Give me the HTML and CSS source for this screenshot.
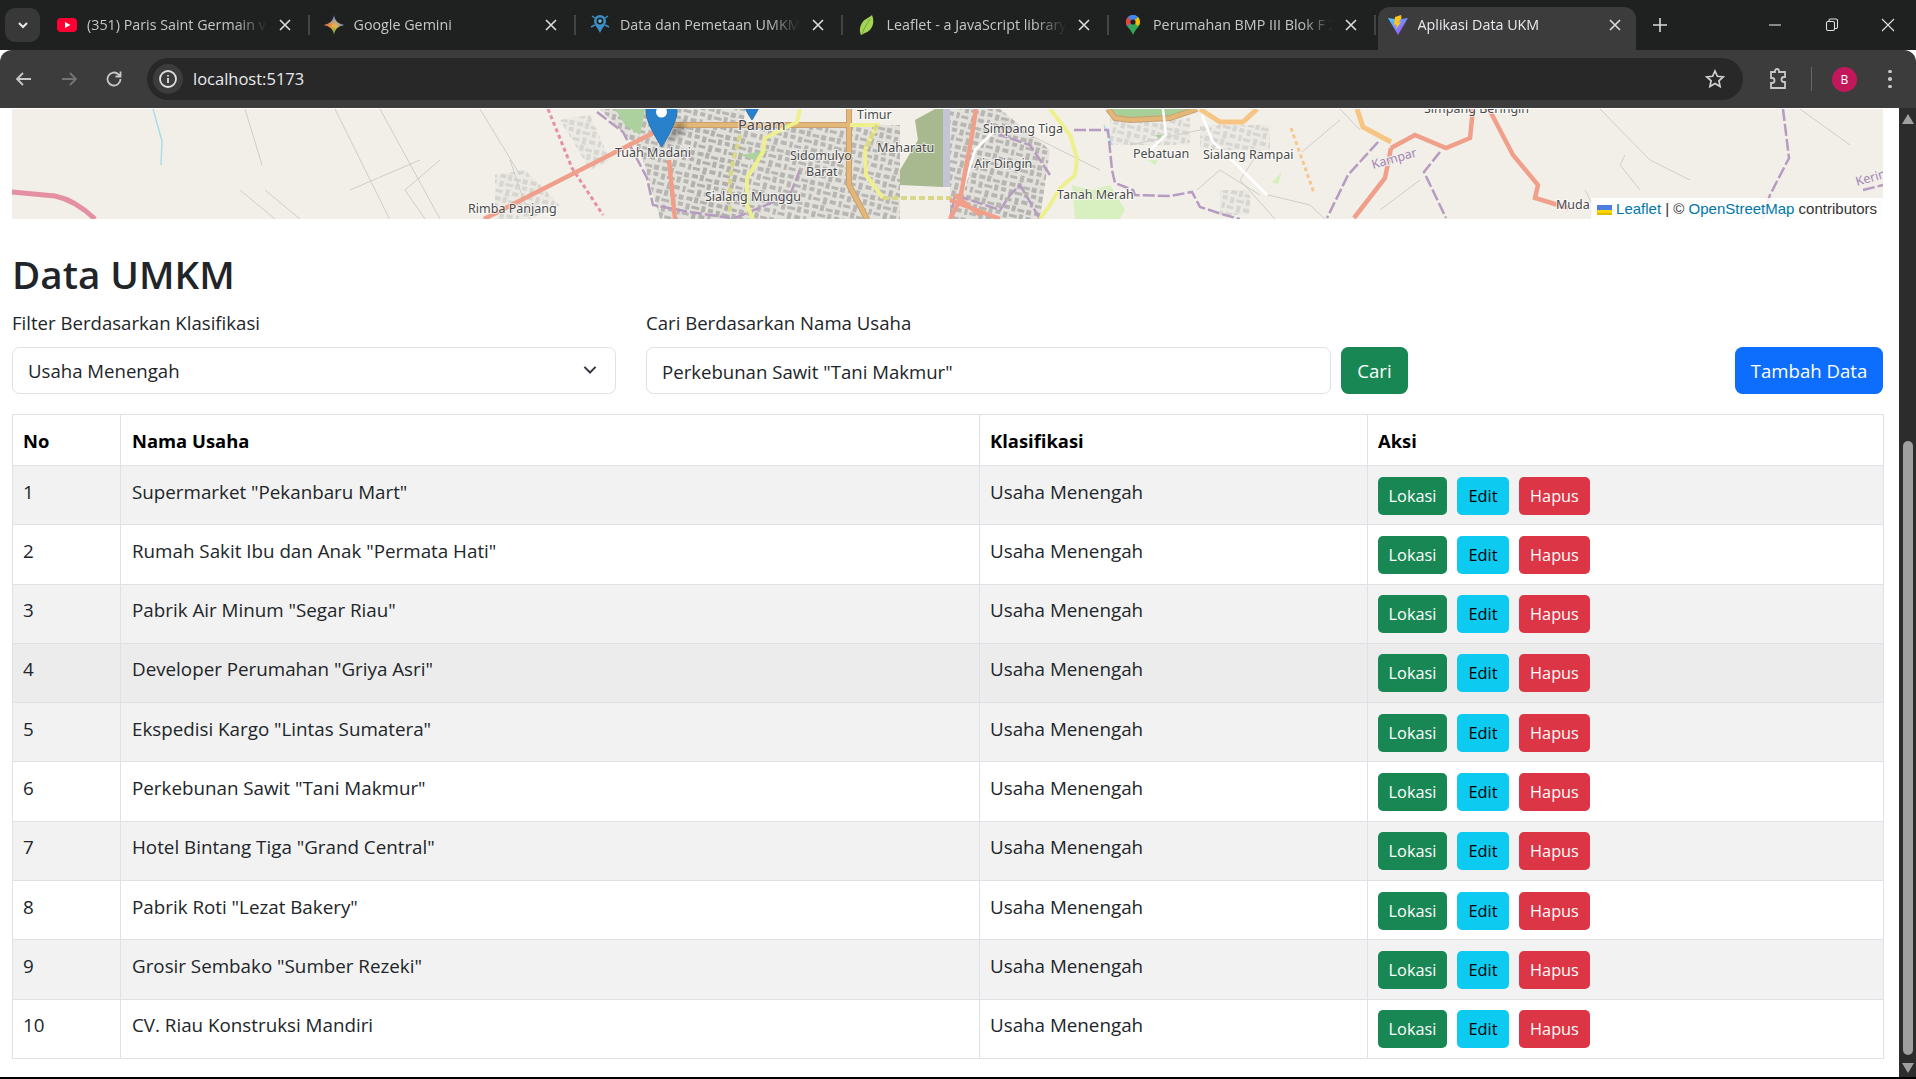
FILE: index.html
```html
<!DOCTYPE html>
<html lang="id">
<head>
<meta charset="utf-8">
<title>Aplikasi Data UKM</title>
<link rel="stylesheet" href="styles.css">
</head>
<body>
<div class="browser">
  <header class="tabstrip">
    <button class="tab-search" aria-label="Cari tab"><svg width="14" height="14" viewBox="0 0 14 14"><path class="ic-bold" d="M3 5l4 4 4-4"/></svg></button>
    <div class="tab">
      <svg class="fav" width="20" height="20" viewBox="0 0 20 20"><rect x="0" y="3" width="20" height="14" rx="4" fill="#ff0033"/><path d="M8 7l5.500 3L8 13z" fill="#fff"/></svg>
      <span class="tab-title">(351) Paris Saint Germain vs Arsenal</span>
      <svg class="tab-close" width="12" height="12" viewBox="0 0 12 12"><path d="M1 1l10 10M11 1L1 11"/></svg>
    </div>
    <div class="tab">
      <svg class="fav" width="20" height="20" viewBox="0 0 20 20"><defs><linearGradient id="gem" x1="0" y1="0" x2="0" y2="1"><stop offset="0" stop-color="#4c8df6"/><stop offset=".55" stop-color="#f3b33d"/><stop offset="1" stop-color="#34a853"/></linearGradient><linearGradient id="gem2" x1="0" y1="0" x2="1" y2="0"><stop offset="0" stop-color="#e8574b"/><stop offset=".5" stop-color="#e8574b" stop-opacity="0"/><stop offset=".6" stop-color="#4c8df6" stop-opacity="0"/><stop offset="1" stop-color="#4c8df6"/></linearGradient></defs><path d="M10 0c.8 5.500 4 9 10 10-6 1-9.200 4.500-10 10-.8-5.500-4-9-10-10C6 9 9.200 5.500 10 0z" fill="url(#gem)"/><path d="M10 0c.8 5.500 4 9 10 10-6 1-9.200 4.500-10 10-.8-5.500-4-9-10-10C6 9 9.200 5.500 10 0z" fill="url(#gem2)"/></svg>
      <span class="tab-title">Google Gemini</span>
      <svg class="tab-close" width="12" height="12" viewBox="0 0 12 12"><path d="M1 1l10 10M11 1L1 11"/></svg>
    </div>
    <div class="tab">
      <svg class="fav" width="20" height="20" viewBox="0 0 20 20"><path d="M4 6a6 6 0 0 1 12 0c0 4-4 7-6 12C8 13 4 10 4 6z" fill="#3b8fc4"/><circle cx="10" cy="6" r="3.500" fill="#1f2222"/><circle cx="10" cy="6" r="1.800" fill="#6db7e3"/><path d="M1 12l4-2M19 12l-4-2M2 1l3 2M18 1l-3 2" stroke="#3b8fc4" stroke-width="1.400"/></svg>
      <span class="tab-title">Data dan Pemetaan UMKM Pekanbaru</span>
      <svg class="tab-close" width="12" height="12" viewBox="0 0 12 12"><path d="M1 1l10 10M11 1L1 11"/></svg>
    </div>
    <div class="tab">
      <svg class="fav" width="20" height="20" viewBox="0 0 20 20"><path d="M15 0c3 7 1 15-7 18-2 1-4 2-4 2s-3-6 1-12C7 4 12 3 15 0z" fill="#a4d454"/><path d="M13 4C10 9 7 13 5 19" stroke="#6c9a2c" stroke-width=".8" fill="none"/></svg>
      <span class="tab-title">Leaflet - a JavaScript library for</span>
      <svg class="tab-close" width="12" height="12" viewBox="0 0 12 12"><path d="M1 1l10 10M11 1L1 11"/></svg>
    </div>
    <div class="tab">
      <svg class="fav" width="20" height="20" viewBox="0 0 20 20"><path d="M10 0a7 7 0 0 1 7 7c0 5-5 7-7 13-2-6-7-8-7-13a7 7 0 0 1 7-7z" fill="#34a853"/><path d="M5 2a7 7 0 0 1 10 0L5 12a7 7 0 0 1-2-5 7 7 0 0 1 2-5z" fill="#4285f4"/><path d="M5 2l5 5-6 4c-1-1-1-3-1-4a7 7 0 0 1 2-5z" fill="#ea4335"/><path d="M15 2a7 7 0 0 1 2 5c0 2-1 3-2 4L10 7z" fill="#fbbc04"/><circle cx="10" cy="7" r="2.600" fill="#1f2222"/></svg>
      <span class="tab-title">Perumahan BMP III Blok F 2 No 12</span>
      <svg class="tab-close" width="12" height="12" viewBox="0 0 12 12"><path d="M1 1l10 10M11 1L1 11"/></svg>
    </div>
    <div class="tab tab-active">
      <svg class="fav" width="20" height="20" viewBox="0 0 20 20"><defs><linearGradient id="vite" x1="0" y1="0" x2="1" y2="1"><stop offset="0" stop-color="#41d1ff"/><stop offset="1" stop-color="#bd34fe"/></linearGradient></defs><path d="M0 3l10 1.500L20 3 10 20z" fill="url(#vite)"/><path d="M13 0L7 2 6 10l2.500-.5L8 14l5-7-2.500.5L13.500 3z" fill="#ffc517"/></svg>
      <span class="tab-title">Aplikasi Data UKM</span>
      <svg class="tab-close" width="12" height="12" viewBox="0 0 12 12"><path d="M1 1l10 10M11 1L1 11"/></svg>
    </div>
    <svg class="new-tab" width="16" height="16" viewBox="0 0 16 16"><path d="M8 1v14M1 8h14"/></svg>
    <div class="window-controls">
      <svg width="14" height="14" viewBox="0 0 14 14"><path d="M1 7h12"/></svg>
      <svg width="14" height="14" viewBox="0 0 14 14"><rect x="1.500" y="3.500" width="8" height="9" rx="1.500"/><path d="M4 3V2.500A1.500 1.500 0 0 1 5.500 1H11a1.500 1.500 0 0 1 1.500 1.500V9a1.500 1.500 0 0 1-1.500 1.500h-1"/></svg>
      <svg width="14" height="14" viewBox="0 0 14 14"><path d="M1 1l12 12M13 1L1 13"/></svg>
    </div>
  </header>

  <nav class="toolbar">
    <svg class="nav-ic" width="20" height="20" viewBox="0 0 20 20"><path d="M17 10H3M9 4l-6 6 6 6"/></svg>
    <svg class="nav-ic nav-off" width="20" height="20" viewBox="0 0 20 20"><path d="M3 10h14M11 4l6 6-6 6"/></svg>
    <svg class="nav-ic" width="20" height="20" viewBox="0 0 20 20"><path d="M16.500 10a6.500 6.500 0 1 1-2-4.700L16.500 7.500M16.500 2.500v5h-5"/></svg>
    <div class="omnibox">
      <span class="site-info"><svg width="20" height="20" viewBox="0 0 20 20"><circle cx="10" cy="10" r="8"/><path d="M10 9v5M10 6v1.500"/></svg></span>
      <span class="url">localhost:5173</span>
      <svg class="star" width="20" height="20" viewBox="0 0 20 20"><path d="M10 2l2.400 5.300 5.800.6-4.300 3.900 1.200 5.700L10 14.600l-5.100 2.900 1.200-5.700L1.800 7.900l5.800-.6z"/></svg>
    </div>
    <svg class="ext" width="20" height="22" viewBox="0 0 20 22"><path d="M7 4V3a2 2 0 0 1 4 0v1h6v5h-1a2 2 0 0 0 0 5h1v6H3v-5h1a2 2 0 0 0 0-5H3V4z"/></svg>
    <span class="tool-sep"></span>
    <span class="avatar">B</span>
    <span class="kebab"><i></i><i></i><i></i></span>
  </nav>

  <div class="viewport">
    <main class="page">
      <section class="map">
        <svg class="map-svg" viewBox="12 109 1871 110" preserveAspectRatio="none">
          <defs>
            <pattern id="blocks" width="31" height="23" patternUnits="userSpaceOnUse" patternTransform="rotate(14)">
              <rect width="31" height="23" class="blk-bg"/>
              <rect x="1" y="1" width="6" height="4" class="blk"/><rect x="9" y="0" width="4" height="6" class="blk"/><rect x="15" y="2" width="7" height="3" class="blk"/><rect x="24" y="1" width="5" height="5" class="blk"/>
              <rect x="2" y="8" width="4" height="6" class="blk"/><rect x="8" y="9" width="8" height="3" class="blk"/><rect x="18" y="7" width="4" height="6" class="blk"/><rect x="25" y="8" width="5" height="4" class="blk"/>
              <rect x="0" y="17" width="7" height="3" class="blk"/><rect x="10" y="15" width="4" height="7" class="blk"/><rect x="17" y="16" width="6" height="4" class="blk"/><rect x="26" y="15" width="3" height="6" class="blk"/>
            </pattern>
            <filter id="soft"><feGaussianBlur stdDeviation=".7"/></filter>
            <filter id="shadow"><feGaussianBlur stdDeviation="3"/></filter>
          </defs>
          <g filter="url(#soft)">
            <path class="city" d="M600 109L640 150L660 219H735L745 109z"/>
            <path class="city" d="M690 125H850V219H690z"/>
            <path class="city" d="M850 125H900V219H850z"/>
            <path class="city" d="M950 109H1000L1050 150L1040 219H950z"/>
            <path class="city-thin" d="M1110 118H1190V145H1110zM1200 125H1270V150H1200zM1220 190H1250V215H1220zM1000 190H1040V219H1000z"/>
            <path class="city-thin" d="M495 175L525 170L560 205L530 219H495zM560 120L590 115L610 160L590 170z"/>
            <path class="green" d="M615 109H645L640 135L625 125z"/>
            <path class="forest" d="M935 109H943V187L900 185L900 170L918 140L915 120z"/>
            <path class="airport" d="M943 109H950V187H943z"/>
            <path class="green-l" d="M1072 185L1092 190L1110 185L1125 210L1120 219H1075z"/>
            <path class="green-l" d="M1272 182L1282 172L1278 185zM1147 160H1158L1155 165z"/>
            <path class="green-band" d="M1108 109H1197L1170 117L1130 120L1108 112z"/>
            <path class="green" d="M740 155L770 150L755 160zM1155 135L1162 135L1160 140z"/>
            <path class="thin" d="M245 109L262 165M380 109L440 219M335 109L395 230M240 190L275 219M265 190L300 219M425 219L405 190L440 160M350 190L420 160M480 109L520 175M510 160L530 219M1000 120L1100 170M1200 130L1130 145M1302 152L1340 120M1275 219L1240 180L1260 150M1268 195L1310 205L1325 219M1197 190L1220 170L1260 195M1340 109L1360 130M1600 109L1650 160L1690 180M1640 190L1620 165L1625 155M1800 109L1850 145M1420 180L1380 210M1585 190L1600 219"/>
            <path class="river" d="M153 109L162 141L161 165M1104 125L1112 145"/>
            <path class="motorway" d="M12 192L55 196Q75 200 95 219"/>
            <path class="rail-pink" d="M548 109L572 168L603 215"/>
            <path class="rail-orange" d="M1291 128L1314 193"/>
            <path class="boundary" d="M597 112L623 132L647 178L653 205L690 212L730 218M735 218L790 195L800 170M1074 130L1108 130L1112 170L1115 183L1133 190L1135 195L1170 196L1192 192L1200 207L1225 215L1240 219M1378 142L1348 175L1327 218M1440 152L1424 172L1446 218M1783 109L1789 158L1770 195L1762 219M1050 175L1030 145L1000 135M1040 219L1020 185L1010 195L1000 210L955 195L950 219M1863 190L1883 185"/>
            <path class="road-tan-c" d="M672 125H850M849 109V185L867 219"/>
            <path class="road-tan" d="M672 125H850M849 109V185L867 219"/>
            <path class="road-tan-c" d="M1108 109L1115 118L1130 120L1170 118L1197 109"/>
            <path class="road-tan" d="M1108 109L1115 118L1130 120L1170 118L1197 109"/>
            <path class="road-orange" d="M1200 109L1220 122L1243 122L1257 109M1357 109L1363 127L1391 142"/>
            <path class="road-yellow" d="M800 109L797 122L765 138L763 152L747 178L747 205L753 219M850 125H877L865 150L866 175L883 198M1050 109L1070 135L1077 158L1075 175L1060 188L1050 205L1040 219"/>
            <path class="road-yellow-d" d="M883 198H960M740 135L733 162L730 178L730 212M877 125L865 150"/>
            <path class="road-white" d="M1202 115L1213 142L1237 165L1267 195M1163 109L1166 135L1150 150M960 200L975 150L995 130"/>
            <path class="road-pink" d="M484 219L655 132M669 160L675 219M1391 148L1415 135L1446 148L1470 138L1473 109M1391 148L1385 178L1354 218M1489 109L1513 155L1538 185L1535 198L1568 208M976 109L972 135L960 200L950 219M950 200L1000 219M955 195L980 215"/>
          </g>
          <text class="lbl" x="615" y="157">Tuah Madani</text>
          <text class="lbl lbl-big" x="738" y="130">Panam</text>
          <text class="lbl" x="857" y="119">Timur</text>
          <text class="lbl" x="877" y="152">Maharatu</text>
          <text class="lbl" x="790" y="160">Sidomulyo</text>
          <text class="lbl" x="806" y="176">Barat</text>
          <text class="lbl" x="705" y="201">Sialang Munggu</text>
          <text class="lbl" x="468" y="213">Rimba Panjang</text>
          <text class="lbl" x="983" y="133">Simpang Tiga</text>
          <text class="lbl" x="974" y="168">Air Dingin</text>
          <text class="lbl" x="1133" y="158">Pebatuan</text>
          <text class="lbl" x="1203" y="159">Sialang Rampai</text>
          <text class="lbl" x="1057" y="199">Tanah Merah</text>
          <text class="lbl" x="1424" y="113">Simpang Beringin</text>
          <text class="lbl" x="1556" y="209">Muda</text>
          <text class="lbl-purple" transform="translate(1373 169) rotate(-16)">Kampar</text>
          <text class="lbl-purple" transform="translate(1857 186) rotate(-16)">Kerinci</text>
          <path class="pin-shadow" filter="url(#shadow)" d="M661 147L680 120L686 130z"/>
          <path class="pin" d="M661.600 96C652 96 646 103 646 112C646 123 661.600 147 661.600 147C661.600 147 677 123 677 112C677 103 671 96 661.600 96z"/>
          <circle class="pin-dot" cx="661.500" cy="112" r="5.500"/>
          <path class="pin" d="M752 69C742 69 736 76 736 85C736 96 752 120 752 120C752 120 767 96 767 85C767 76 762 69 752 69z"/>
        </svg>
        <div class="attribution"><svg class="flag" width="15" height="10" viewBox="0 0 15 10"><rect width="15" height="5" fill="#4C7BE1"/><rect y="5" width="15" height="3" fill="#FFD500"/><rect y="8" width="15" height="2" fill="#E0BC00"/></svg><a href="#">Leaflet</a> | © <a href="#">OpenStreetMap</a> contributors</div>
      </section>

      <h2 class="title">Data UMKM</h2>

      <form class="filters">
        <div class="field field-select">
          <label for="klas">Filter Berdasarkan Klasifikasi</label>
          <div class="select-wrap">
            <select id="klas" class="control"><option>Usaha Menengah</option></select>
            <svg class="chevron" width="20" height="20" viewBox="0 0 16 16"><path d="M3.500 5.500L8 10l4.500-4.500"/></svg>
          </div>
        </div>
        <div class="field field-search">
          <label for="cari">Cari Berdasarkan Nama Usaha</label>
          <div class="search-row">
            <input id="cari" class="control" type="text" value="Perkebunan Sawit &quot;Tani Makmur&quot;">
            <button type="button" class="btn btn-lg-green">Cari</button>
          </div>
        </div>
        <button type="button" class="btn btn-add">Tambah Data</button>
      </form>

      <table class="data">
        <colgroup><col class="c1"><col class="c2"><col class="c3"><col class="c4"></colgroup>
        <thead><tr><th>No</th><th>Nama Usaha</th><th>Klasifikasi</th><th>Aksi</th></tr></thead>
        <tbody>
          <tr><td>1</td><td>Supermarket "Pekanbaru Mart"</td><td>Usaha Menengah</td><td><div class="acts"><button class="btn sm lokasi">Lokasi</button><button class="btn sm edit">Edit</button><button class="btn sm hapus">Hapus</button></div></td></tr>
          <tr><td>2</td><td>Rumah Sakit Ibu dan Anak "Permata Hati"</td><td>Usaha Menengah</td><td><div class="acts"><button class="btn sm lokasi">Lokasi</button><button class="btn sm edit">Edit</button><button class="btn sm hapus">Hapus</button></div></td></tr>
          <tr><td>3</td><td>Pabrik Air Minum "Segar Riau"</td><td>Usaha Menengah</td><td><div class="acts"><button class="btn sm lokasi">Lokasi</button><button class="btn sm edit">Edit</button><button class="btn sm hapus">Hapus</button></div></td></tr>
          <tr class="hovered"><td>4</td><td>Developer Perumahan "Griya Asri"</td><td>Usaha Menengah</td><td><div class="acts"><button class="btn sm lokasi">Lokasi</button><button class="btn sm edit">Edit</button><button class="btn sm hapus">Hapus</button></div></td></tr>
          <tr><td>5</td><td>Ekspedisi Kargo "Lintas Sumatera"</td><td>Usaha Menengah</td><td><div class="acts"><button class="btn sm lokasi">Lokasi</button><button class="btn sm edit">Edit</button><button class="btn sm hapus">Hapus</button></div></td></tr>
          <tr><td>6</td><td>Perkebunan Sawit "Tani Makmur"</td><td>Usaha Menengah</td><td><div class="acts"><button class="btn sm lokasi">Lokasi</button><button class="btn sm edit">Edit</button><button class="btn sm hapus">Hapus</button></div></td></tr>
          <tr><td>7</td><td>Hotel Bintang Tiga "Grand Central"</td><td>Usaha Menengah</td><td><div class="acts"><button class="btn sm lokasi">Lokasi</button><button class="btn sm edit">Edit</button><button class="btn sm hapus">Hapus</button></div></td></tr>
          <tr><td>8</td><td>Pabrik Roti "Lezat Bakery"</td><td>Usaha Menengah</td><td><div class="acts"><button class="btn sm lokasi">Lokasi</button><button class="btn sm edit">Edit</button><button class="btn sm hapus">Hapus</button></div></td></tr>
          <tr><td>9</td><td>Grosir Sembako "Sumber Rezeki"</td><td>Usaha Menengah</td><td><div class="acts"><button class="btn sm lokasi">Lokasi</button><button class="btn sm edit">Edit</button><button class="btn sm hapus">Hapus</button></div></td></tr>
          <tr><td>10</td><td>CV. Riau Konstruksi Mandiri</td><td>Usaha Menengah</td><td><div class="acts"><button class="btn sm lokasi">Lokasi</button><button class="btn sm edit">Edit</button><button class="btn sm hapus">Hapus</button></div></td></tr>
        </tbody>
      </table>
    </main>
    <aside class="scrollbar">
      <svg width="12" height="10" viewBox="0 0 12 10"><path d="M6 0l6 10H0z"/></svg>
      <div class="thumb"></div>
      <svg width="12" height="10" viewBox="0 0 12 10"><path d="M0 0h12L6 10z"/></svg>
    </aside>
  </div>
  <div class="taskbar-edge"></div>
</div>
</body>
</html>
```
FILE: styles.css
```css
* { box-sizing: border-box; }
html, body { margin: 0; height: 100%; overflow: hidden; background: #fff; }
body { font-family: "Open Sans", "Noto Sans", sans-serif; font-size: 18.6px; line-height: 30px; color: #212529; }
.browser { width: 1916px; height: 1079px; display: flex; flex-direction: column; overflow: hidden; }

/* tab strip */
.tabstrip { height: 50px; background: #1f2121; display: flex; align-items: flex-start; padding: 7px 0 0 5px; flex: none; }
.tab-search { width: 35px; height: 34px; margin: 1px 4px 0 0; border: 0; border-radius: 10px; background: #383838; display: flex; align-items: center; justify-content: center; padding: 0; }
.ic-bold { fill: none; stroke: #e8e8e8; stroke-width: 2; }
.tab { width: 266.5px; height: 43px; flex: none; display: flex; align-items: center; padding: 0 20px 7px 13px; position: relative; color: #c4c7c5; font-size: 14.300px; line-height: 20px; }
.tab::after { content: ""; position: absolute; right: 1px; top: 8px; width: 2px; height: 20px; background: #444; }
.tab:nth-last-of-type(2)::after, .tab-active::after { display: none; }
.fav { flex: none; margin-right: 10px; }
.tab-title { flex: 1; min-width: 0; white-space: nowrap; overflow: hidden; -webkit-mask-image: linear-gradient(90deg, #000 82%, transparent 100%); mask-image: linear-gradient(90deg, #000 82%, transparent 100%); }
.tab-close { flex: none; margin-left: 12px; }
.tab-close path { stroke: #dcdcdc; stroke-width: 1.6; fill: none; }
.tab-active { width: 258px; background: #3c3c3c; border-radius: 12px 12px 0 0; color: #e8eaed; padding: 0 15px 7px 10px; margin-left: 1px; }
.new-tab { margin: 10px 0 0 16px; flex: none; }
.new-tab path { stroke: #d8d8d8; stroke-width: 1.6; fill: none; }
.window-controls { margin-left: auto; width: 127px; margin-right: 21px; display: flex; justify-content: space-between; padding-top: 11px; }
.window-controls svg { fill: none; stroke: #e0e0e0; stroke-width: 1.1; }

/* toolbar */
.toolbar { height: 58px; flex: none; background: #3c3c3c; border-radius: 12px 12px 0 0; display: flex; align-items: center; padding: 0 17px 0 14px; position: relative; }
.nav-ic { flex: none; margin-right: 24.800px; fill: none; stroke: #c8c8c8; stroke-width: 1.8; }
.nav-off { stroke: #747474; }
.omnibox { width: 1596px; height: 42px; margin-left: -1.400px; background: #282828; border-radius: 21px; display: flex; align-items: center; padding: 0 18px 0 6px; color: #e8eaed; }
.site-info { width: 30px; height: 30px; border-radius: 50%; background: #3c3c3c; display: flex; align-items: center; justify-content: center; flex: none; }
.site-info svg { fill: none; stroke: #e0e0e0; stroke-width: 1.8; }
.url { margin-left: 10px; font-size: 16.500px; line-height: 24px; }
.star { margin-left: auto; fill: none; stroke: #d0d0d0; stroke-width: 1.700; }
.ext { flex: none; margin-left: 25px; fill: none; stroke: #c8c8c8; stroke-width: 1.800; }
.tool-sep { width: 1px; height: 24px; background: #666; margin-left: 23px; flex: none; }
.avatar { width: 25px; height: 25px; margin-left: 20px; border-radius: 50%; background: #c2185b; color: #fff; font-size: 12px; line-height: 25px; text-align: center; flex: none; }
.kebab { margin-left: 31px; display: flex; flex-direction: column; gap: 4px; flex: none; }
.kebab i { width: 3.500px; height: 3.500px; border-radius: 50%; background: #c8c8c8; display: block; }

/* viewport */
.viewport { flex: 1; min-height: 0; display: flex; }
.page { flex: 1; min-width: 0; padding: 1px 16px 0 12px; overflow: hidden; }
.scrollbar { width: 17px; flex: none; background: #2c2c2c; display: flex; flex-direction: column; align-items: center; padding-top: 6px; padding-bottom: 3px; }
.scrollbar svg { fill: #9f9f9f; flex: none; }
.thumb { width: 10px; height: 614px; margin: 317px 0 8px; background: #9f9f9f; border-radius: 5px; }
.taskbar-edge { height: 2px; background: #000; flex: none; }

/* map */
.map { height: 110px; position: relative; background: #f2efe9; overflow: hidden; }
.map-svg { display: block; width: 100%; height: 100%; }
.blk { fill: #b2b0ac; }
.blk-bg { fill: #e2e0db; }
.city { fill: url(#blocks); opacity: .9; }
.city-thin { fill: url(#blocks); opacity: .4; }
.green { fill: #add19e; }
.green-l { fill: #d8efc0; }
.green-band { fill: #a8cf98; }
.forest { fill: #a8b98f; }
.airport { fill: #c4c4d6; }
.thin { fill: none; stroke: #cfcdc8; stroke-width: 1; }
.river { fill: none; stroke: #a9dde9; stroke-width: 1.500; }
.motorway { fill: none; stroke: #e590a2; stroke-width: 5; }
.rail-pink { fill: none; stroke: #e88fa8; stroke-width: 3; stroke-dasharray: 4 3; }
.rail-orange { fill: none; stroke: #f6c890; stroke-width: 3; stroke-dasharray: 4 3; }
.boundary { fill: none; stroke: #b69cc0; stroke-width: 2.500; stroke-dasharray: 12 3; }
.road-tan-c { fill: none; stroke: #c8a070; stroke-width: 6; }
.road-tan { fill: none; stroke: #e3b777; stroke-width: 4; }
.road-orange { fill: none; stroke: #f7c583; stroke-width: 5; }
.road-yellow { fill: none; stroke: #eef08e; stroke-width: 4; }
.road-yellow-d { fill: none; stroke: #d8d888; stroke-width: 4; stroke-dasharray: 6 3; }
.road-white { fill: none; stroke: #fff; stroke-width: 2.500; }
.road-pink { fill: none; stroke: #f0a08a; stroke-width: 4.500; }
.lbl { font-family: "Noto Sans", sans-serif; font-size: 12.500px; fill: #4a4a4a; stroke: #fff; stroke-width: 2px; stroke-opacity: .7; paint-order: stroke; }
.lbl-big { font-size: 14.500px; }
.lbl-purple { font-family: "Noto Sans", sans-serif; font-size: 12.500px; fill: #a385b5; stroke: #f2efe9; stroke-width: 2px; paint-order: stroke; }
.pin { fill: #2a81cb; stroke: #2670ae; stroke-width: 1; }
.pin-dot { fill: #fff; }
.pin-shadow { fill: #000; opacity: .35; }
.attribution { position: absolute; right: 0; bottom: 0; height: 21px; padding: 0 6px; background: rgba(255,255,255,.85); font-family: "Liberation Sans", Arial, sans-serif; font-size: 15px; line-height: 21px; color: #333; white-space: nowrap; }
.attribution a { color: #0078a8; text-decoration: none; }
.flag { display: inline-block; margin-right: 4px; vertical-align: -1px; }

/* heading & filters */
.title { margin: 31px 0 10px; font-size: 38.600px; font-weight: 600; line-height: 48px; color: #212529; }
.filters { display: flex; align-items: flex-end; margin-bottom: 20px; }
.field label { display: block; line-height: 30px; margin-bottom: 9px; }
.field-select { width: 604px; margin-right: 30px; }
.field-search { width: 762px; }
.select-wrap { position: relative; }
.control { display: block; width: 100%; height: 47px; border: 1px solid #dee2e6; border-radius: 7.500px; background: #fff; padding: 1px 15px 0; font: inherit; color: #212529; outline: 0; appearance: none; -webkit-appearance: none; }
.chevron { position: absolute; right: 16px; top: 13px; fill: none; stroke: #343a40; stroke-width: 1.600; pointer-events: none; }
.search-row { display: flex; gap: 10px; }
.search-row .control { width: 685px; }
.btn { border: 1px solid transparent; font: inherit; color: #fff; padding: 0; text-align: center; }
.btn-lg-green { width: 67px; height: 47px; background: #198754; border-radius: 7.500px; flex: none; }
.btn-add { width: 148px; height: 47px; margin-left: auto; background: #0d6efd; border-radius: 7.500px; flex: none; }

/* table */
.data { width: 1871px; table-layout: fixed; border-collapse: collapse; border: 1px solid #dee2e6; }
.c1 { width: 108px; } .c2 { width: 859px; } .c3 { width: 388px; } .c4 { width: 516px; }
.data th, .data td { border: 1px solid #dee2e6; padding: 10.500px 10px 9.500px; text-align: left; vertical-align: top; }
.data th:nth-child(2), .data td:nth-child(2) { padding-left: 11px; }
.data td { font-size: 18.800px; }
.data th { font-weight: 700; color: #000; font-size: 18.400px; height: 51px; }
.data tbody tr { height: 59.300px; }
.data tbody tr:nth-child(odd) { background: #f2f2f2; }
.data tbody tr.hovered { background: #ececec; }
.acts { display: flex; gap: 10px; }
.sm { height: 38px; font-size: 16.300px; line-height: 26px; border-radius: 5px; flex: none; }
.lokasi { width: 69px; background: #198754; }
.edit { width: 52px; background: #0dcaf0; color: #000; }
.hapus { width: 71px; background: #dc3545; }
```
